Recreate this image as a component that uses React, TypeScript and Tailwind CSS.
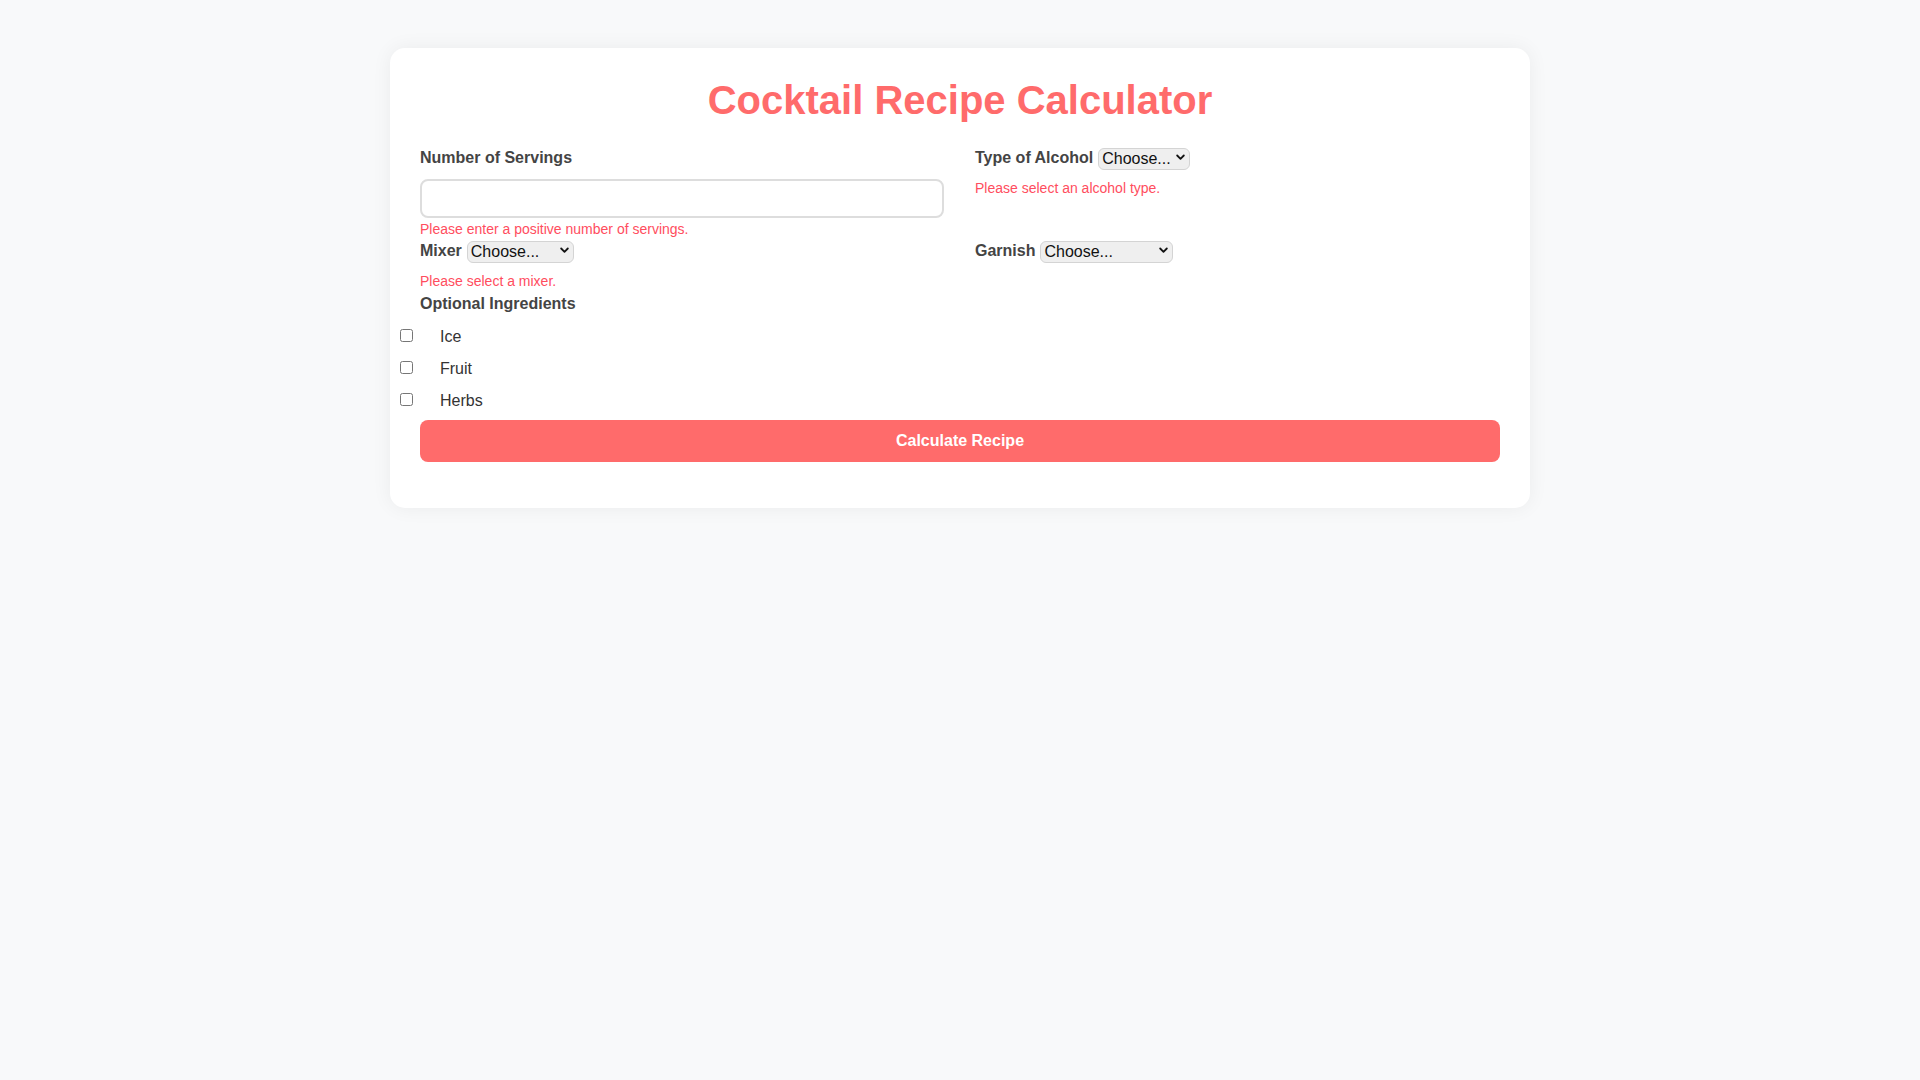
import React, { useState } from 'react';

const FONT = '"Liberation Sans", Arial, Helvetica, sans-serif';

interface ChoiceProps {
  label: string;
  width: string;
  options: string[];
}

const Choice: React.FC<ChoiceProps> = ({ label, width, options }) => {
  const [value, setValue] = useState('');
  return (
    <div className="flex items-center h-[22px]">
      <label className="text-[16px] font-bold text-[#444] leading-[22px] mr-[5px]">{label}</label>
      <div className={`relative h-[22px] ${width}`}>
        <select
          value={value}
          onChange={(e) => setValue(e.target.value)}
          className="appearance-none w-full h-[22px] bg-[#efefef] border border-[#d4d4d4] rounded-[6px] pl-[3px] pr-[18px] text-[16px] leading-[20px] text-[#111] outline-none"
        >
          <option value="">Choose...</option>
          {options.map((o) => (
            <option key={o} value={o}>
              {o}
            </option>
          ))}
        </select>
        <svg
          className="absolute right-[5px] top-[7px] pointer-events-none"
          width="9"
          height="7"
          viewBox="0 0 9 7"
          fill="none"
        >
          <path d="M1.2 1.5 L4.5 4.8 L7.8 1.5" stroke="#111" strokeWidth="1.8" strokeLinecap="round" strokeLinejoin="round" />
        </svg>
      </div>
    </div>
  );
};

const ErrorText: React.FC<{ children: React.ReactNode; className?: string }> = ({ children, className = '' }) => (
  <div className={`text-[14px] leading-[16px] text-[#ff4d5e] ${className}`}>{children}</div>
);

export default function App() {
  const [servings, setServings] = useState('');
  const extras = ['Ice', 'Fruit', 'Herbs'];

  return (
    <div className="min-h-screen w-full bg-[#f8f9fa] pt-[48px]" style={{ fontFamily: FONT }}>
      <div className="mx-auto w-[1140px] bg-white rounded-[15px] shadow-[0_0_20px_rgba(0,0,0,0.06)] px-[30px] pt-[31px] pb-[46px]">
        <h1 className="text-center text-[40px] leading-[42px] font-bold text-[#ff6b6b] mb-[26px]">
          Cocktail Recipe Calculator
        </h1>

        <div className="grid grid-cols-[525px_525px] gap-x-[30px] gap-y-[3px]">
          <div className="flex flex-col">
            <label className="text-[16px] font-bold text-[#444] leading-[22px]">Number of Servings</label>
            <input
              type="number"
              value={servings}
              onChange={(e) => setServings(e.target.value)}
              className="mt-[10px] w-[524px] h-[39px] border-2 border-[#ddd] rounded-[8px] px-[10px] text-[16px] outline-none"
            />
            <ErrorText className="mt-[3px]">Please enter a positive number of servings.</ErrorText>
          </div>

          <div className="flex flex-col">
            <Choice label="Type of Alcohol" width="w-[92px]" options={['Vodka', 'Rum', 'Gin']} />
            <ErrorText className="mt-[11px]">Please select an alcohol type.</ErrorText>
          </div>

          <div className="flex flex-col">
            <Choice label="Mixer" width="w-[107px]" options={['Soda', 'Tonic', 'Juice']} />
            <ErrorText className="mt-[11px]">Please select a mixer.</ErrorText>
          </div>

          <div className="flex flex-col">
            <Choice label="Garnish" width="w-[133px]" options={['Lime', 'Mint', 'Cherry']} />
          </div>
        </div>

        <div className="mt-[5px] text-[16px] font-bold text-[#444] leading-[19px]">Optional Ingredients</div>
        <div className="mt-[6px] flex flex-col">
          {extras.map((item) => (
            <div key={item} className="flex items-center h-[32px] -ml-[20px]">
              <input type="checkbox" id={item} className="m-0 w-[13px] h-[13px]" />
              <label htmlFor={item} className="ml-[27px] mt-[3px] text-[16px] text-[#333] leading-[18px]">
                {item}
              </label>
            </div>
          ))}
        </div>

        <button className="mt-[5px] w-full h-[42px] bg-[#ff6b6b] rounded-[8px] text-white text-[16px] font-bold">
          Calculate Recipe
        </button>
      </div>
    </div>
  );
}
